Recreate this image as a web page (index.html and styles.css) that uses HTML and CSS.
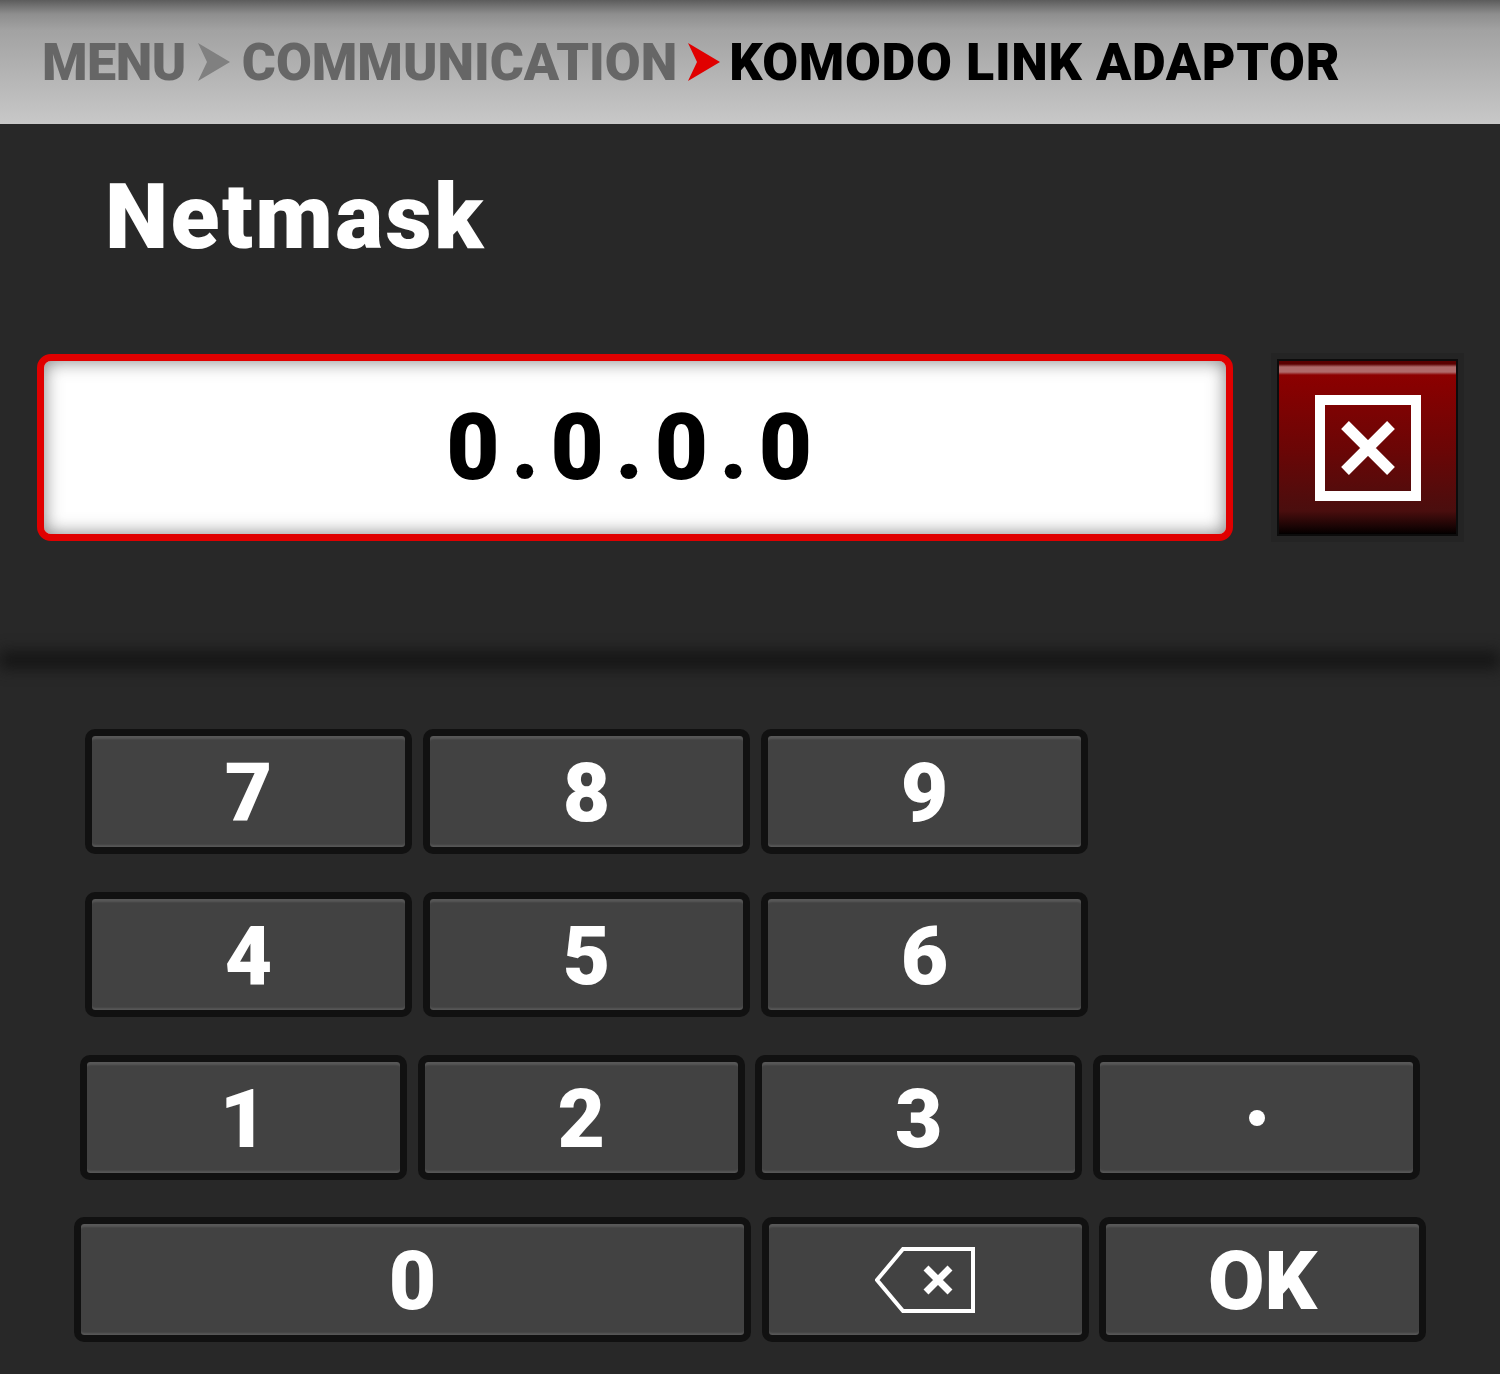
FILE: index.html
```html
<!DOCTYPE html>
<html lang="en">
<head>
  <meta charset="UTF-8" />
  <title>Netmask</title>
  <link rel="stylesheet" href="styles.css">
</head>
<body>
  <header class="crumbs">
    <span class="crumb crumb-short">MENU</span>
    <svg class="chev" viewBox="0 0 34 38"><path d="M1 0 L33 19 L1 38 L10 19 Z" fill="#808080"/></svg>
    <span class="crumb">COMMUNICATION</span>
    <svg class="chev chev-on" viewBox="0 0 34 38"><path d="M1 0 L33 19 L1 38 L10 19 Z" fill="#e00000"/></svg>
    <span class="crumb crumb-on">KOMODO LINK ADAPTOR</span>
  </header>

  <h1 class="title">Netmask</h1>

  <div class="entry">
    <div class="field">0.0.0.0</div>
    <button class="clear">
      <svg viewBox="0 0 106 106" width="106" height="106">
        <rect x="5" y="5" width="96" height="96" fill="none" stroke="#fff" stroke-width="10"/>
        <path d="M30 30 L76 76 M76 30 L30 76" stroke="#fff" stroke-width="11" fill="none"/>
      </svg>
    </button>
  </div>

  <div class="divider"></div>

  <div class="keypad">
    <div class="row row-a">
      <button class="key">7</button>
      <button class="key">8</button>
      <button class="key">9</button>
    </div>
    <div class="row row-a">
      <button class="key">4</button>
      <button class="key">5</button>
      <button class="key">6</button>
    </div>
    <div class="row row-b">
      <button class="key">1</button>
      <button class="key">2</button>
      <button class="key">3</button>
      <button class="key"><span class="dot"></span></button>
    </div>
    <div class="row row-c">
      <button class="key key-wide">0</button>
      <button class="key">
        <svg class="back" viewBox="0 0 100 66" width="100" height="66">
          <path d="M98 2 H28 L2 33 L28 64 H98 Z" fill="none" stroke="#fff" stroke-width="4"/>
          <path d="M51 21 L75 45 M75 21 L51 45" stroke="#fff" stroke-width="7" fill="none"/>
        </svg>
      </button>
      <button class="key key-ok">OK</button>
    </div>
  </div>
</body>
</html>
```

FILE: styles.css
```css
* { box-sizing: border-box; }

body {
  margin: 0;
  height: 1374px;
  overflow: hidden;
  background: #282828;
  font-family: Roboto, "Liberation Sans", sans-serif;
  color: #fff;
}

.crumbs {
  height: 124px;
  padding: 0 0 0 42px;
  display: flex;
  align-items: center;
  background: linear-gradient(to bottom, #5c5c5c 0, #8e8e8e 14px, #a2a2a2 30px, #c8c8c8 124px);
  font-size: 52px;
  font-weight: 900;
}

.crumb { color: #666; }
.crumb-short { letter-spacing: -0.5px; }
.crumb-on { color: #000; letter-spacing: 0.65px; }

.chev {
  width: 34px;
  height: 38px;
  margin: 0 11px;
}

.chev-on { margin: 0 8px 0 10px; }

.title {
  margin: 0;
  height: 230px;
  padding: 42px 0 0 105px;
  font-size: 90px;
  line-height: 104px;
  font-weight: 900;
  letter-spacing: 2.4px;
}

.entry {
  display: flex;
  align-items: center;
  height: 187px;
  padding-left: 37px;
  gap: 44px;
}

.field {
  width: 1196px;
  height: 187px;
  border: 7px solid #e00000;
  border-radius: 14px;
  background: #fff;
  box-shadow: inset 0 0 18px rgba(70, 70, 70, 0.7);
  color: #000;
  font-size: 92px;
  font-weight: 900;
  letter-spacing: 11.5px;
  display: flex;
  align-items: center;
  justify-content: center;
}

.clear {
  width: 181px;
  height: 177px;
  padding: 0;
  border: 2px solid #0c0c0c;
  box-shadow: 0 0 0 6px #242424;
  background: linear-gradient(to bottom, #5a0000 0, #5a0000 3px, #b06a6a 6px, #b06a6a 11px, #8c0000 14px, #6a0606 90px, #4a0e0e 150px, #060000 172px, #000 100%);
  display: flex;
  align-items: center;
  justify-content: center;
}

.divider {
  height: 16px;
  margin-top: 111px;
  background: #121212;
  filter: blur(8px);
}

.keypad {
  margin-top: 61px;
  display: flex;
  flex-direction: column;
  gap: 38px;
}

.row {
  display: flex;
  gap: 11px;
}

.row-a { padding-left: 85px; }
.row-b { padding-left: 80px; gap: 10.7px; }
.row-c { padding-left: 74px; gap: 10.5px; margin-top: -1px; }

.key {
  flex: none;
  width: 327px;
  height: 125px;
  padding: 3px 0 0;
  border: 7px solid #111;
  border-radius: 10px;
  background: #424242;
  box-shadow: inset 0 4px 2px -1px #585858, inset 0 -3px 2px -1px #585858;
  color: #fff;
  font-family: inherit;
  font-size: 82px;
  font-weight: 900;
  display: flex;
  align-items: center;
  justify-content: center;
}

.key-wide { width: 677px; }

.back { margin-top: -3px; }

.dot {
  width: 16px;
  height: 16px;
  margin-top: -3px;
  border-radius: 50%;
  background: #fff;
}
```
